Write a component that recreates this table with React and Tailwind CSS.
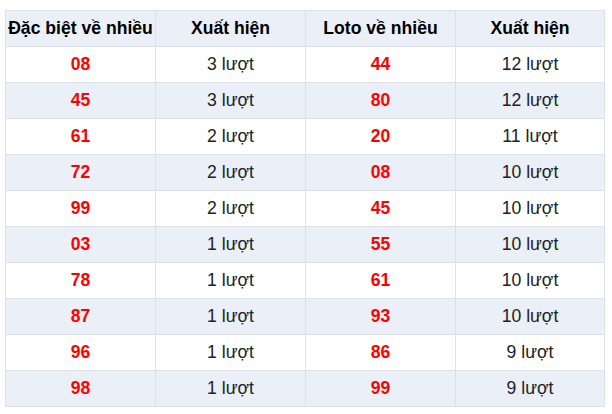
import React from "react";

const rows = [
  ["08", "3 lượt", "44", "12 lượt"],
  ["45", "3 lượt", "80", "12 lượt"],
  ["61", "2 lượt", "20", "11 lượt"],
  ["72", "2 lượt", "08", "10 lượt"],
  ["99", "2 lượt", "45", "10 lượt"],
  ["03", "1 lượt", "55", "10 lượt"],
  ["78", "1 lượt", "61", "10 lượt"],
  ["87", "1 lượt", "93", "10 lượt"],
  ["96", "1 lượt", "86", "9 lượt"],
  ["98", "1 lượt", "99", "9 lượt"],
];

const headers = ["Đặc biệt về nhiều", "Xuất hiện", "Loto về nhiều", "Xuất hiện"];

export default function App() {
  return (
    <div className="w-[612px] h-[414px] bg-white pl-[5px] pt-[10px]" style={{ fontFamily: '"Liberation Sans", Arial, sans-serif' }}>
      <div className="grid grid-cols-[150px_150px_150px_149px] w-[600px] border-t border-l border-[#dde1e8]">
        {headers.map((h, i) => (
          <div key={i} className="h-[36px] flex items-center justify-center border-r border-b border-[#dde1e8] bg-[#eaeff8] font-bold text-[17.6px] text-black whitespace-nowrap">
            {h}
          </div>
        ))}
        {rows.map((r, ri) =>
          r.map((c, ci) => (
            <div
              key={ri + "-" + ci}
              className={
                "h-[36px] flex items-center justify-center border-r border-b border-[#dde1e8] text-[17.6px] " +
                (ri % 2 === 1 ? "bg-[#eaeff8] " : "bg-white ") +
                (ci % 2 === 0 ? "font-bold text-[#ff0000]" : "text-[#222222]")
              }
            >
              {c}
            </div>
          ))
        )}
      </div>
    </div>
  );
}
